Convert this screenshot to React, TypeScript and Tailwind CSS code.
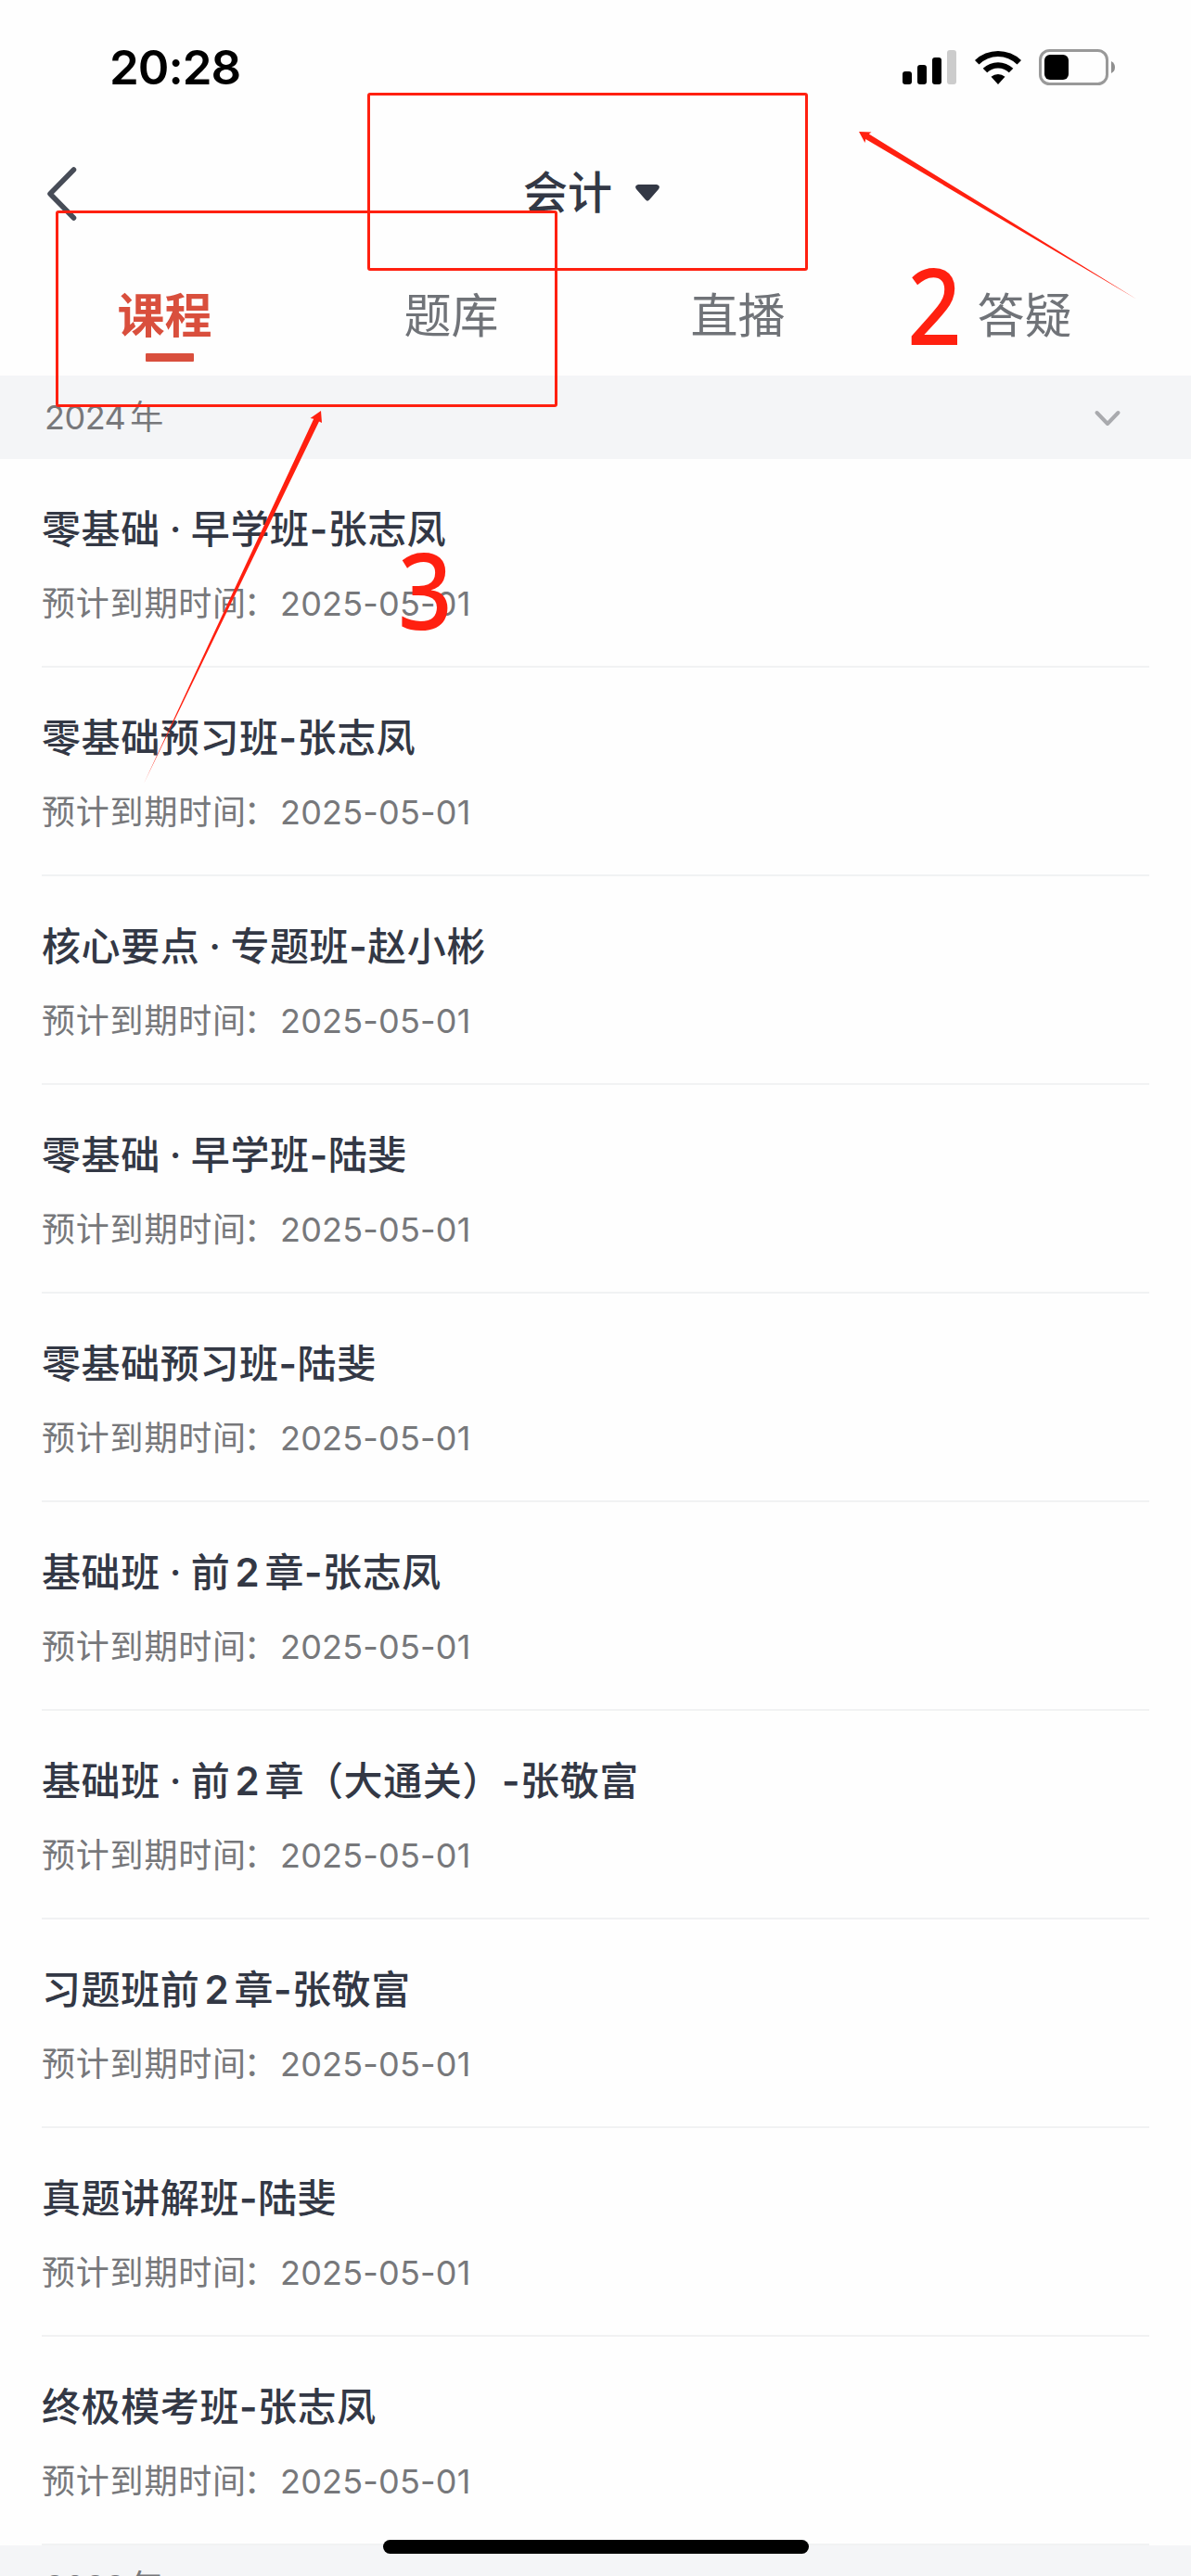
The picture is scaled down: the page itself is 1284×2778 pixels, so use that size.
import type { ReactNode } from 'react';

type Course = {
  title: string;
  expire: string;
};

const tabs = ['课程', '题库', '直播', '答疑'];

const courses: Course[] = [
  { title: '零基础·早学班-张志凤', expire: '2025-05-01' },
  { title: '零基础预习班-张志凤', expire: '2025-05-01' },
  { title: '核心要点·专题班-赵小彬', expire: '2025-05-01' },
  { title: '零基础·早学班-陆斐', expire: '2025-05-01' },
  { title: '零基础预习班-陆斐', expire: '2025-05-01' },
  { title: '基础班·前2章-张志凤', expire: '2025-05-01' },
  { title: '基础班·前2章（大通关）-张敬富', expire: '2025-05-01' },
  { title: '习题班前2章-张敬富', expire: '2025-05-01' },
  { title: '真题讲解班-陆斐', expire: '2025-05-01' },
  { title: '终极模考班-张志凤', expire: '2025-05-01' },
];

// Latin digits and the middle dot get a little air next to the Chinese characters
function spaced(text: string): ReactNode[] {
  return text.split(/(\d+|·|-)/).map((part, i) => {
    if (part === '·') return <span key={i} className="inline-block w-[33px] text-center">·</span>;
    if (part === '-') return <span key={i} className="inline-block w-[20px] text-center font-semibold">-</span>;
    if (/^\d+$/.test(part)) return <span key={i} className="inline-block w-[37px] text-center font-semibold">{part}</span>;
    return part;
  });
}

function StatusBar() {
  return (
    <div className="flex h-[145px] items-center justify-between pl-[118px] pr-[81px]">
      <span className="text-[51px] leading-none font-semibold tracking-[-1px] text-black">20:28</span>
      <div className="flex items-center">
        <svg width="58" height="38" viewBox="0 0 58 38">
          <rect x="0" y="23" width="10" height="14" rx="3" />
          <rect x="16" y="16" width="10" height="21" rx="3" />
          <rect x="32" y="8" width="10" height="29" rx="3" />
          <rect x="48" y="0" width="10" height="37" rx="3" fill="#cccccc" />
        </svg>
        <svg className="ml-5" width="50" height="38" viewBox="0 0 50 38">
          <path d="M0 11 A36 36 0 0 1 50 11 L45.500 15.600 A29 29 0 0 0 4.500 15.600 Z" />
          <path d="M8.700 19.800 A23.500 23.500 0 0 1 41.300 19.800 L36.800 24.300 A17 17 0 0 0 13.200 24.300 Z" />
          <path d="M17.500 28.800 A11.500 11.500 0 0 1 32.500 28.800 L25 37 Z" />
        </svg>
        <svg className="ml-[19px]" width="83" height="40" viewBox="0 0 83 40">
          <rect x="1.500" y="1.500" width="72" height="36" rx="10" fill="none" stroke="#999999" strokeWidth="3" />
          <rect x="6" y="6" width="26" height="27" rx="6" />
          <path d="M78 13 Q82 15 82 19.500 Q82 24 78 26 Z" fill="#8f8f8f" />
        </svg>
      </div>
    </div>
  );
}

function NavBar() {
  return (
    <div className="grid h-[128px] grid-cols-3 items-center px-[50px]">
      <svg width="34" height="60" viewBox="0 0 34 60" fill="none" stroke="#474c57" strokeWidth="5.500" strokeLinecap="round" strokeLinejoin="round">
        <path d="M29.500 4 L4 30 L29.500 56" />
      </svg>
      <div className="flex items-center justify-center pr-[9px] pb-[3px]">
        <span className="text-[48px] leading-none font-medium">会计</span>
        <svg className="ml-[25px]" width="26" height="18" viewBox="0 0 26 18" fill="#333845">
          <path d="M3 0 H23 Q27.500 1 25 5 L15 16.500 Q13 18.800 11 16.500 L1 5 Q-1.500 1 3 0 Z" />
        </svg>
      </div>
    </div>
  );
}

function Tabs() {
  return (
    <div className="grid h-[132px] grid-cols-4 pr-[25px] pl-[23px]">
      {tabs.map((tab, i) => (
        <div key={tab} className="flex flex-col items-center pt-[42px]">
          <span
            className={
              i === 0
                ? 'text-[51px] leading-[52px] font-bold text-[#d94f3d]'
                : 'text-[51px] leading-[52px] text-[#707378]'
            }
          >
            {tab}
          </span>
          {i === 0 && <div className="mt-[14px] ml-[10px] h-[9px] w-[52px] rounded-[1px] bg-[#d94f3d]" />}
        </div>
      ))}
    </div>
  );
}

function YearHeader({ year }: { year: string }) {
  return (
    <div className="flex h-[90px] items-center justify-between bg-[#f4f5f7] pl-[48px] pr-[75px] text-[36px] leading-none text-[#77787b]">
      <span>
        <span className="tracking-[-0.5px]">{year}</span>
        <span className="ml-[5px]">年</span>
      </span>
      <svg className="mt-[2px]" width="30" height="18" viewBox="0 0 30 18" fill="none" stroke="#a9aaae" strokeWidth="4" strokeLinecap="round" strokeLinejoin="round">
        <path d="M3.500 3 L15 15 L26.500 3" />
      </svg>
    </div>
  );
}

function CourseRow({ course }: { course: Course }) {
  return (
    <div className="mx-[45px] flex h-[225px] flex-col border-b-2 border-[#f1f2f3] pt-[53px]">
      <div className="text-[42px] leading-[46px] font-medium tracking-[0.6px] whitespace-nowrap">{spaced(course.title)}</div>
      <div className="mt-[36px] flex text-[36px] leading-[42px] text-[#77787b]">
        <span className="w-[257px] tracking-[0.8px] whitespace-nowrap">
          预计到期时间<span className="-ml-[3px]">：</span>
        </span>
        <span className="tracking-[0.2px]">{course.expire}</span>
      </div>
    </div>
  );
}

// Red hand-placed marks that sit on top of the page
function Annotations() {
  return (
    <div className="pointer-events-none absolute inset-0 text-[#ff2010]">
      <div className="absolute top-[100px] left-[396px] h-[192px] w-[475px] rounded-[3px] border-3 border-current" />
      <div className="absolute top-[227px] left-[60px] h-[212px] w-[541px] rounded-[3px] border-3 border-current" />
      <svg className="absolute inset-0" width="1284" height="900" viewBox="0 0 1284 900" fill="currentColor">
        <path d="M926 142 L939.500 142.500 L936.800 144.600 L1226 323 L933.200 150 L932.500 154 Z" />
        <path d="M346 443 L347 456 L344 454.500 L155 845 L338.200 451.800 L334.500 451 Z" />
      </svg>
      <span className="absolute top-[271px] left-[978px] origin-left scale-x-90 font-['Noto_Sans'] text-[114px] leading-[114px] font-medium">2</span>
      <span className="absolute top-[578px] left-[429px] origin-left scale-x-90 font-['Noto_Sans'] text-[114px] leading-[114px] font-medium">3</span>
    </div>
  );
}

export default function App() {
  return (
    <div className="relative h-[2778px] w-[1284px] overflow-hidden bg-[#fefefe] font-['Inter','Noto_Sans_CJK_SC',sans-serif] text-[#333845]">
      <StatusBar />
      <NavBar />
      <Tabs />
      <YearHeader year="2024" />
      {courses.map((course) => (
        <CourseRow key={course.title} course={course} />
      ))}
      <YearHeader year="2023" />
      <Annotations />
      {/* Home indicator */}
      <div className="absolute top-[2739px] left-[413px] h-[15px] w-[459px] rounded-full bg-black" />
    </div>
  );
}
